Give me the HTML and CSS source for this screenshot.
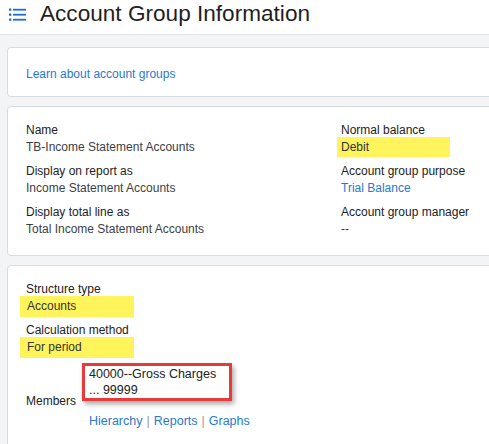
FILE: index.html
```html
<!DOCTYPE html>
<html>
<head>
  <meta charset="UTF-8">
  <title>Account Group Information</title>
  <link rel="stylesheet" href="styles.css">
</head>
<body>
  <header class="page-header">
    <svg class="menu-icon" width="17" height="13" viewBox="0 0 17 13">
      <rect x="0" y="0.5" width="2.3" height="2.3" fill="#1b6fcf"/>
      <rect x="4" y="0.8" width="13" height="1.8" fill="#1b6fcf"/>
      <rect x="0" y="5.5" width="2.3" height="2.3" fill="#1b6fcf"/>
      <rect x="4" y="5.8" width="13" height="1.8" fill="#1b6fcf"/>
      <rect x="0" y="10.5" width="2.3" height="2.3" fill="#1b6fcf"/>
      <rect x="4" y="10.8" width="13" height="1.8" fill="#1b6fcf"/>
    </svg>
    <h1>Account Group Information</h1>
  </header>

  <main class="content">
    <section class="card card-intro">
      <a href="#">Learn about account groups</a>
    </section>

    <section class="card">
      <div class="field-grid">
        <div class="col">
          <div class="field">
            <div class="label">Name</div>
            <div class="value">TB-Income Statement Accounts</div>
          </div>
          <div class="field">
            <div class="label">Display on report as</div>
            <div class="value">Income Statement Accounts</div>
          </div>
          <div class="field">
            <div class="label">Display total line as</div>
            <div class="value">Total Income Statement Accounts</div>
          </div>
        </div>
        <div class="col">
          <div class="field">
            <div class="label">Normal balance</div>
            <div class="value"><span class="hl hl-right">Debit</span></div>
          </div>
          <div class="field">
            <div class="label">Account group purpose</div>
            <div class="value"><a href="#">Trial Balance</a></div>
          </div>
          <div class="field">
            <div class="label">Account group manager</div>
            <div class="value">--</div>
          </div>
        </div>
      </div>
    </section>

    <section class="card card-structure">
      <div class="field">
        <div class="label">Structure type</div>
        <div class="value"><span class="hl hl-left">Accounts</span></div>
      </div>
      <div class="field">
        <div class="label">Calculation method</div>
        <div class="value"><span class="hl hl-left">For period</span></div>
      </div>

      <div class="members">
        <div class="members-label">Members</div>
        <div class="members-value">
          <div class="member-box">
            <div>40000--Gross Charges</div>
            <div>... 99999</div>
          </div>
          <div class="member-links">
            <a href="#">Hierarchy</a><span class="sep">|</span><a href="#">Reports</a><span class="sep">|</span><a href="#">Graphs</a>
          </div>
        </div>
      </div>
    </section>
  </main>
</body>
</html>
```

FILE: styles.css
```css
body {
  margin: 0;
  background: #f2f4f5;
  font-family: "Liberation Sans", Arial, sans-serif;
  color: #222;
  overflow: hidden;
}
a {
  color: #2a78cf;
  text-decoration: none;
}
.page-header {
  display: flex;
  align-items: flex-start;
  height: 34px;
  padding: 0 9px;
  background: #fff;
  border-bottom: 1px solid #e2e6e8;
}
.menu-icon {
  margin-top: 8px;
  margin-right: 14px;
  flex: none;
}
h1 {
  margin: 0;
  font-size: 22.6px;
  font-weight: normal;
  line-height: 28px;
  color: #1f1f1f;
  white-space: nowrap;
}
.content {
  padding: 12px 0 0 7px;
}
.card {
  background: #fff;
  border: 1px solid #d5dde2;
  border-radius: 4px;
  margin-right: -10px;
  margin-bottom: 9px;
  padding: 15px 18px 17px;
  font-size: 12px;
  line-height: 17px;
}
.card-intro {
  padding: 18px 18px 13px;
}
.field-grid {
  display: grid;
  grid-template-columns: 315px 1fr;
}
.field {
  margin-bottom: 7px;
}
.col .field:last-child {
  margin-bottom: 0;
}
.label {
  color: #222;
}
.value {
  color: #3b4046;
}
.hl {
  display: block;
  background: #fff45c;
  color: #333;
}
.hl-right {
  width: 105px;
  margin: -2px 0 -1px -4px;
  padding: 2px 4px 1px;
}
.hl-left {
  width: 101px;
  margin: -2px 0 -2px -6px;
  padding: 2px 6px 2px 7px;
}
.card-structure {
  padding-bottom: 60px;
}
.members {
  display: flex;
  margin-top: 5px;
}
.members-label {
  width: 56px;
  margin-top: 30px;
  flex: none;
}
.member-box {
  box-sizing: border-box;
  width: 150px;
  border: 3px solid #e8393c;
  box-shadow: 2px 3px 5px rgba(0, 0, 0, 0.35);
  padding: 0 6px 0 4px;
  font-size: 12.5px;
  line-height: 16px;
  color: #222;
}
.member-links {
  margin: 12px 0 0 7px;
  font-size: 12.5px;
  line-height: 17px;
}
.sep {
  color: #999;
  margin: 0 4px;
}
```
